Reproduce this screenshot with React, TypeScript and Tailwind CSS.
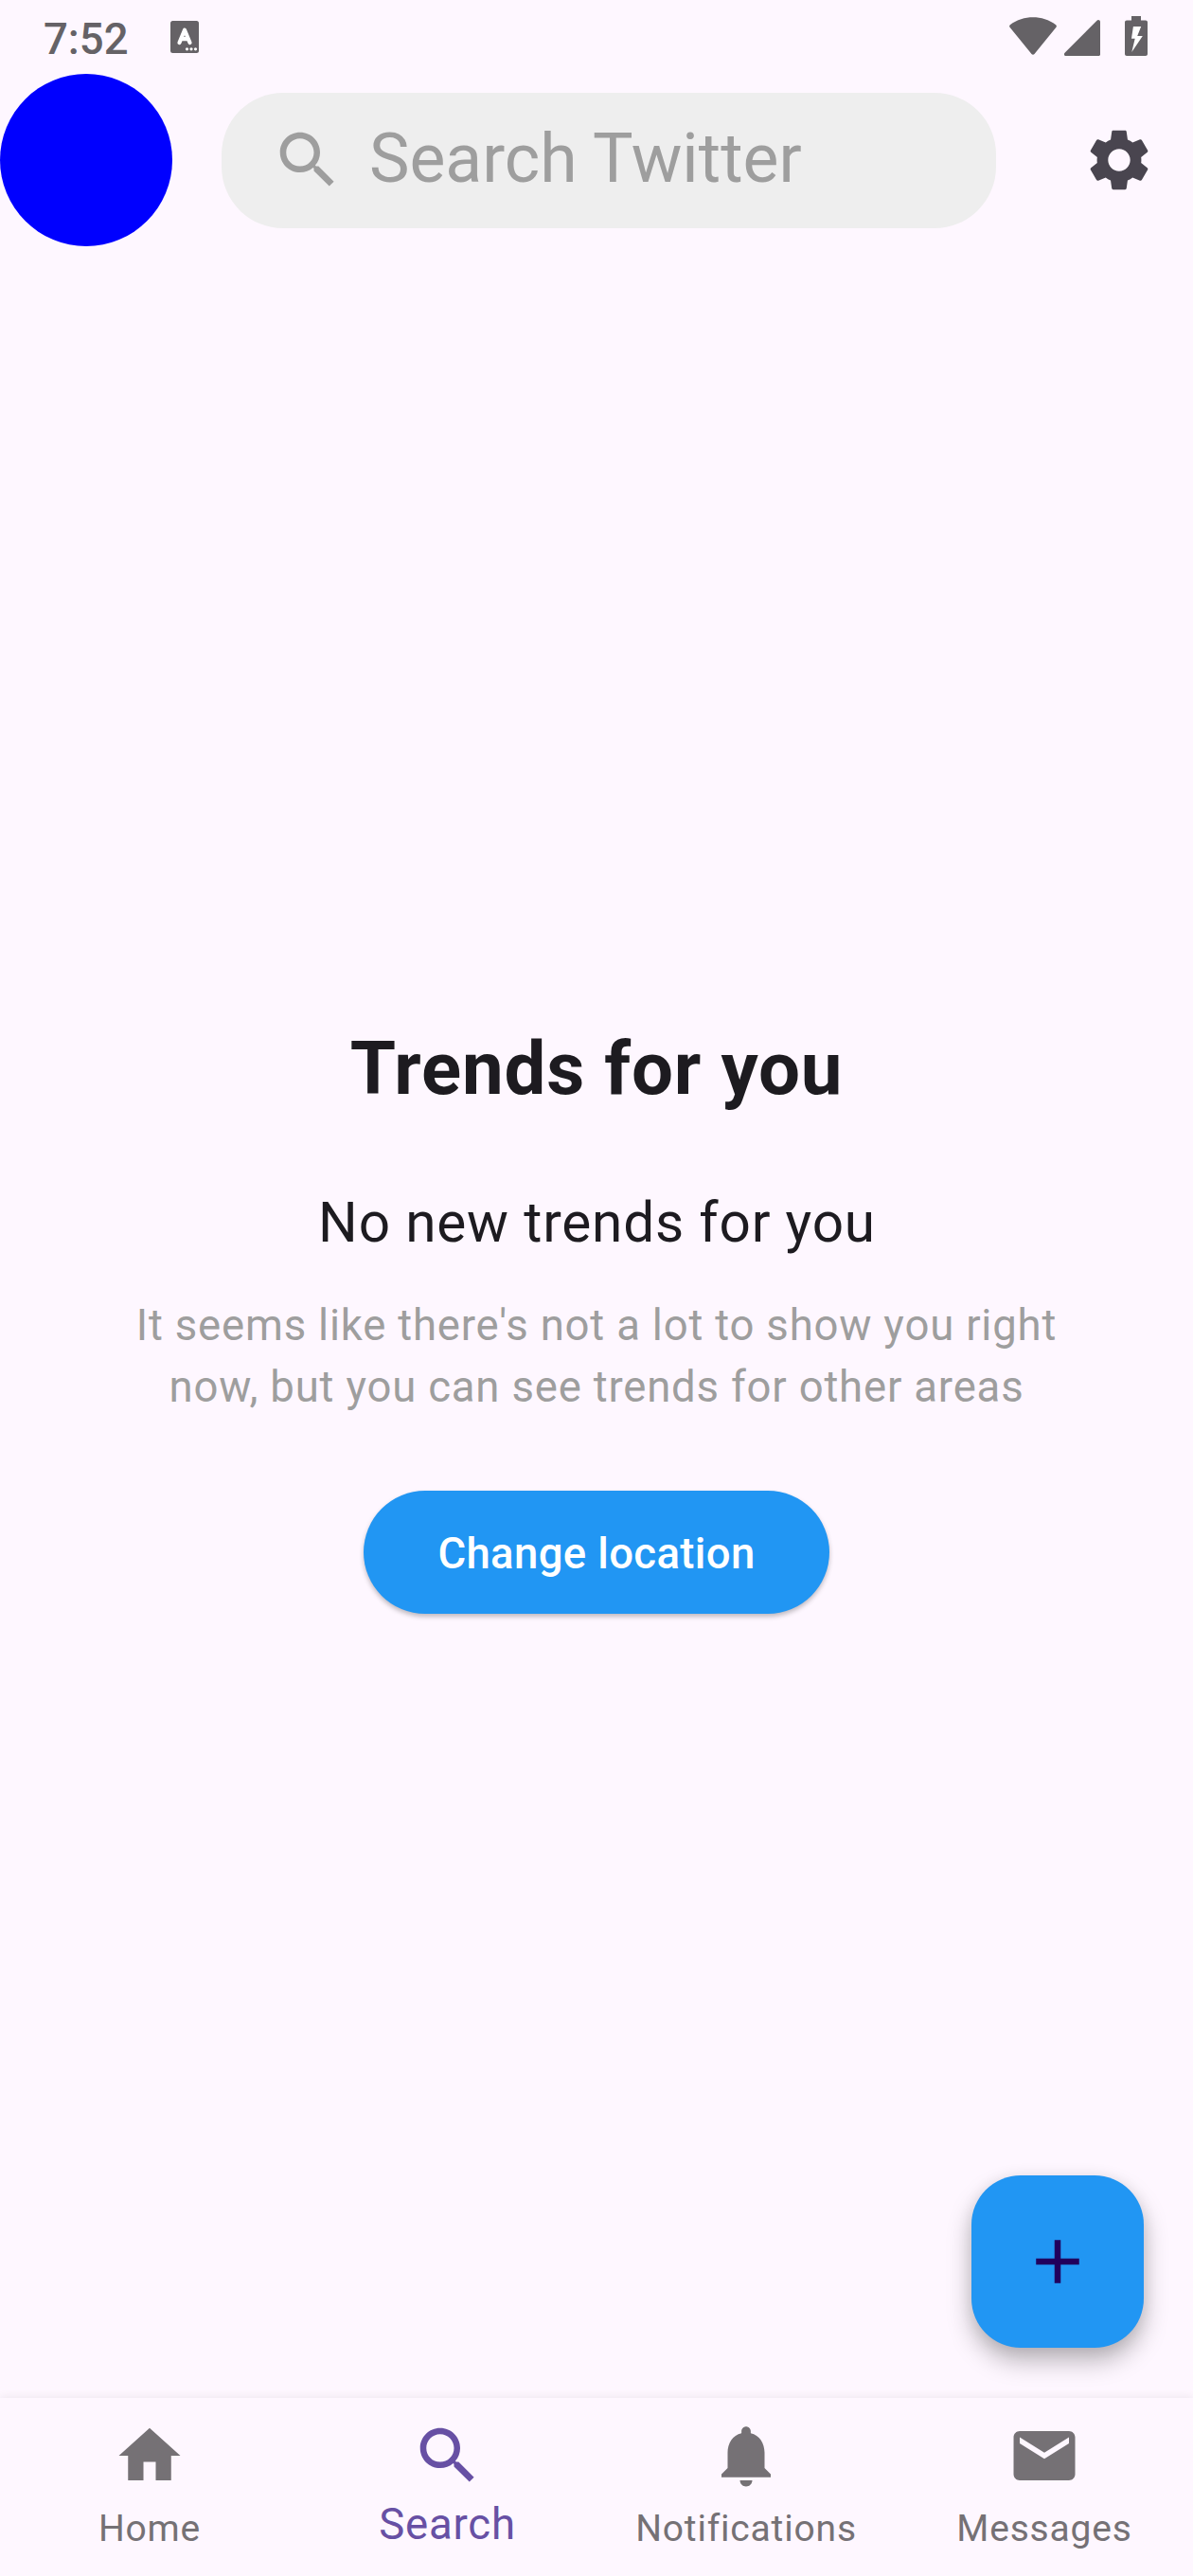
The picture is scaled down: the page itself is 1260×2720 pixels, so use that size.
import React from "react";

type IconProps = { d: string; className?: string };

function Icon({ d, className = "" }: IconProps) {
  return (
    <svg viewBox="0 0 24 24" fill="currentColor" className={`size-[78px] shrink-0 ${className}`}>
      <path d={d} />
    </svg>
  );
}

const SEARCH =
  "M15.5 14h-.79l-.28-.27C15.41 12.59 16 11.11 16 9.5 16 5.91 13.09 3 9.5 3S3 5.91 3 9.5 5.91 16 9.5 16c1.61 0 3.09-.59 4.23-1.57l.27.28v.79l5 4.99L20.49 19l-4.99-5zm-6 0C7.01 14 5 11.99 5 9.5S7.01 5 9.5 5 14 7.01 14 9.5 11.99 14 9.5 14z";
const SETTINGS =
  "M19.14 12.94c.04-.3.06-.61.06-.94 0-.32-.02-.64-.07-.94l2.03-1.58c.18-.14.23-.41.12-.61l-1.92-3.32c-.12-.22-.37-.29-.59-.22l-2.39.96c-.5-.38-1.03-.7-1.62-.94l-.36-2.54c-.04-.24-.24-.41-.48-.41h-3.84c-.24 0-.43.17-.47.41l-.36 2.54c-.59.24-1.13.57-1.62.94l-2.39-.96c-.22-.08-.47 0-.59.22L2.74 8.87c-.12.21-.08.47.12.61l2.03 1.58c-.05.3-.09.63-.09.94s.02.64.07.94l-2.03 1.58c-.18.14-.23.41-.12.61l1.92 3.32c.12.22.37.29.59.22l2.39-.96c.5.38 1.03.7 1.62.94l.36 2.54c.05.24.24.41.48.41h3.84c.24 0 .44-.17.47-.41l.36-2.54c.59-.24 1.13-.56 1.62-.94l2.39.96c.22.08.47 0 .59-.22l1.92-3.32c.12-.22.07-.47-.12-.61l-2.01-1.58zM12 15.6c-1.98 0-3.6-1.62-3.6-3.6s1.62-3.6 3.6-3.6 3.6 1.62 3.6 3.6-1.62 3.6-3.6 3.6z";
const HOME = "M10 20v-6h4v6h5v-8h3L12 3 2 12h3v8z";
const BELL =
  "M12 22c1.1 0 2-.9 2-2h-4c0 1.1.89 2 2 2zm6-6v-5c0-3.07-1.64-5.64-4.5-6.32V4c0-.83-.67-1.5-1.5-1.5s-1.5.67-1.5 1.5v.68C7.63 5.36 6 7.92 6 11v5l-2 2v1h16v-1l-2-2z";
const MAIL =
  "M20 4H4c-1.1 0-1.99.9-1.99 2L2 18c0 1.1.9 2 2 2h16c1.1 0 2-.9 2-2V6c0-1.1-.9-2-2-2zm0 4l-8 5-8-5V6l8 5 8-5v2z";
const PLUS = "M19 13h-6v6h-2v-6H5v-2h6V5h2v6h6v2z";

function StatusBar() {
  return (
    <div className="flex h-[78px] items-start pr-[48px] pl-[46px] text-[#656266]">
      <span className="mt-[15px] text-[45.5px] leading-[54px] font-medium">7:52</span>
      <svg viewBox="0 0 30 34" className="mt-[22px] ml-[44px] h-[34px] w-[30px]">
        <rect width="30" height="34" rx="2.5" fill="currentColor" />
        <path d="M9.5 23 15 9.8 20.5 23M11.5 19.2h7" fill="none" stroke="#fff" strokeWidth="4.2" strokeLinecap="round" strokeLinejoin="round" />
        <circle cx="17.5" cy="29.8" r="1.6" fill="#fff" />
        <circle cx="22" cy="29.8" r="1.6" fill="#fff" />
        <circle cx="26.5" cy="29.8" r="1.6" fill="#fff" />
      </svg>
      <div className="ml-auto flex items-start">
        <svg viewBox="0 0 50 40" fill="currentColor" className="mt-[18px] h-[40px] w-[50px]">
          <path d="M.8 8.2C8 2.8 16.500.2 25 .2s17 2.600 24.200 8c.8.7.9 1.800.3 2.600L26.500 39c-.8 1-2.200 1-3 0L.5 10.800C-.1 10 0 8.900.8 8.200z" />
        </svg>
        <svg viewBox="0 0 38 38" fill="currentColor" className="mt-[21px] ml-[8px] size-[38px]">
          <path d="M34.500.7C35.800-.6 38 .2 38 2v34.500c0 .8-.7 1.500-1.500 1.500H1.600C0 38-.6 36 .6 34.700z" />
        </svg>
        <svg viewBox="0 0 24 42" fill="currentColor" className="mt-[17px] ml-[26px] h-[42px] w-[24px]">
          <path d="M7 0h10v4.500h5c1.100 0 2 .9 2 2V40c0 1.100-.9 2-2 2H2c-1.100 0-2-.9-2-2V6.500c0-1.100.9-2 2-2h5z" />
          <path d="M8.900 11h8.300l-4 10H18.800L7.300 38l3.400-14.300H7z" fill="#fff" />
        </svg>
      </div>
    </div>
  );
}

function TopBar() {
  return (
    <header className="flex h-[182px] items-center">
      <div className="size-[182px] shrink-0 rounded-full bg-[#0000ff]" />
      <div className="ml-[52px] flex h-[143px] w-[818px] items-center rounded-[65px] bg-[#eeeeee] pl-[52px] text-[#9e9e9e]">
        <Icon d={SEARCH} />
        <span className="-mt-[2px] ml-[26px] text-[71.5px] leading-[84px]">Search Twitter</span>
      </div>
      <button className="ml-[91px] text-[#49454f]" aria-label="Settings">
        <Icon d={SETTINGS} />
      </button>
    </header>
  );
}

const tabs = [
  { label: "Home", icon: HOME },
  { label: "Search", icon: SEARCH, active: true },
  { label: "Notifications", icon: BELL },
  { label: "Messages", icon: MAIL },
];

function BottomNav() {
  return (
    <nav className="grid h-[188px] grid-cols-4 bg-[#fef7ff] shadow-[0_-2px_8px_rgba(0,0,0,0.06)]">
      {tabs.map((t) => (
        <div
          key={t.label}
          className={`flex flex-col items-center pt-[22px] ${t.active ? "text-[#6750a4]" : "text-[#757175]"}`}
        >
          <Icon d={t.icon} />
          <span
            className={
              t.active
                ? "mt-px text-[45.5px] leading-[65px] tracking-[0.8125px]"
                : "mt-[7px] pl-px text-[39px] leading-[63px] tracking-[0.8125px]"
            }
          >
            {t.label}
          </span>
        </div>
      ))}
    </nav>
  );
}

export default function App() {
  return (
    <div className="flex h-[2720px] w-[1260px] flex-col bg-[#fef7ff] font-['Roboto',sans-serif] text-[#1d1b20]">
      <StatusBar />
      <TopBar />
      <main className="relative flex flex-1 flex-col items-center pt-[823px] text-center">
        <h1 className="text-[78px] leading-[92px] font-bold tracking-[0.8125px]">Trends for you</h1>
        <p className="mt-[77px] pl-px text-[58.5px] leading-[78px] tracking-[0.8125px]">No new trends for you</p>
        <p className="mt-[37px] text-[45.5px] leading-[65px] tracking-[0.8125px] text-[#9e9e9e]">
          It seems like there's not a lot to show you right
          <br />
          now, but you can see trends for other areas
        </p>
        <button className="mt-[77px] h-[130px] w-[491.5px] rounded-full bg-[#2196f3] pt-[2px] text-[45.5px] leading-[65px] font-medium tracking-[0.35px] text-white shadow-[0_3px_5px_rgba(0,0,0,0.25)]">
          Change location
        </button>
        <button
          aria-label="New post"
          className="absolute right-[52px] bottom-[53px] flex size-[182px] items-center justify-center rounded-[52px] bg-[#2196f3] text-[#21005d] shadow-[0_14px_26px_rgba(0,0,0,0.27),0_2px_16px_rgba(0,0,0,0.08)]"
        >
          <Icon d={PLUS} />
        </button>
      </main>
      <BottomNav />
    </div>
  );
}
